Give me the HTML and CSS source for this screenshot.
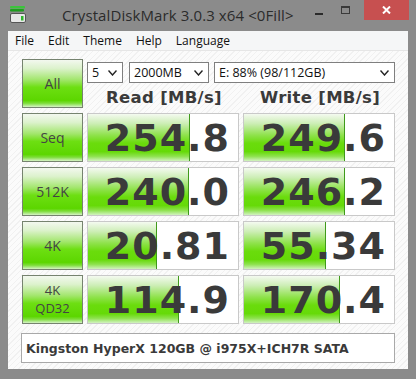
FILE: index.html
```html
<!DOCTYPE html>
<html lang="en">
<head>
  <meta charset="UTF-8" />
  <title>CrystalDiskMark 3.0.3 x64 &lt;0Fill&gt;</title>
  <link rel="stylesheet" href="styles.css">
</head>
<body>
  <div class="window">
    <div class="titlebar">
      <svg class="app-icon" width="16" height="18" viewBox="0 0 16 18">
        <rect x="0" y="0" width="15" height="2.5" rx="1" fill="#3cc43c"/>
        <rect x="0" y="3" width="14" height="2.5" rx="1" fill="#1e9e1e"/>
        <rect x="0.5" y="7.5" width="15" height="9" rx="1.5" fill="#e8e8e8" stroke="#555" stroke-width="1"/>
        <rect x="11" y="10" width="2.5" height="4.5" fill="#2cb82c"/>
      </svg>
      <div class="title">CrystalDiskMark 3.0.3 x64 &lt;0Fill&gt;</div>
      <div class="win-btns">
        <div class="wbtn min"><span></span></div>
        <div class="wbtn max"><span></span></div>
        <div class="wbtn close">
          <svg width="9" height="8" viewBox="0 0 9 8"><path d="M1 0.5 L8 7.5 M8 0.5 L1 7.5" stroke="#fff" stroke-width="2"/></svg>
        </div>
      </div>
    </div>

    <div class="client">
      <div class="menubar">
        <span>File</span><span>Edit</span><span>Theme</span><span>Help</span><span>Language</span>
      </div>

      <div class="content">
        <div class="grid">
          <div class="btn">All</div>
          <div class="top">
            <div class="selects">
              <div class="sel sel-count"><span>5</span><svg width="9" height="6" viewBox="0 0 9 6"><path d="M0.5 0.5 L4.5 5 L8.5 0.5" fill="none" stroke="#222" stroke-width="1.4"/></svg></div>
              <div class="sel sel-size"><span>2000MB</span><svg width="9" height="6" viewBox="0 0 9 6"><path d="M0.5 0.5 L4.5 5 L8.5 0.5" fill="none" stroke="#222" stroke-width="1.4"/></svg></div>
              <div class="sel sel-drive"><span>E: 88% (98/112GB)</span><svg width="9" height="6" viewBox="0 0 9 6"><path d="M0.5 0.5 L4.5 5 L8.5 0.5" fill="none" stroke="#222" stroke-width="1.4"/></svg></div>
            </div>
            <div class="heads">
              <div class="head">Read [MB/s]</div>
              <div class="head">Write [MB/s]</div>
            </div>
          </div>

          <div class="btn">Seq</div>
          <div class="result"><div class="bar" style="width:101px"></div><span>254.8</span></div>
          <div class="result"><div class="bar" style="width:100px"></div><span>249.6</span></div>

          <div class="btn">512K</div>
          <div class="result"><div class="bar" style="width:100px"></div><span>240.0</span></div>
          <div class="result"><div class="bar" style="width:100px"></div><span>246.2</span></div>

          <div class="btn">4K</div>
          <div class="result"><div class="bar" style="width:68px"></div><span>20.81</span></div>
          <div class="result"><div class="bar" style="width:81px"></div><span>55.34</span></div>

          <div class="btn two-line"><span>4K</span><span>QD32</span></div>
          <div class="result"><div class="bar" style="width:90px"></div><span>114.9</span></div>
          <div class="result"><div class="bar" style="width:95px"></div><span>170.4</span></div>
        </div>

        <div class="comment">Kingston HyperX 120GB @ i975X+ICH7R SATA</div>
      </div>
    </div>
  </div>
</body>
</html>
```

FILE: styles.css
```css
html, body {
  margin: 0;
  padding: 0;
}
body {
  width: 416px;
  height: 379px;
  overflow: hidden;
  background: #8b8b8b;
  font-family: "Open Sans", "Noto Sans", sans-serif;
}
.window {
  width: 416px;
  height: 379px;
  display: flex;
  flex-direction: column;
}
.titlebar {
  height: 31px;
  display: flex;
  align-items: flex-start;
}
.app-icon {
  margin: 6px 0 0 10px;
}
.title {
  margin: 5px 0 0 36px;
  font-size: 15px;
  color: #2b2b2b;
  letter-spacing: 0.1px;
}
.win-btns {
  margin-left: auto;
  margin-right: 7px;
  display: flex;
}
.wbtn {
  height: 20px;
  display: flex;
  align-items: center;
  justify-content: center;
}
.wbtn.min {
  width: 26px;
}
.wbtn.min span {
  width: 8px;
  height: 2px;
  background: #2a2a2a;
  margin-top: 7px;
}
.wbtn.max {
  width: 27px;
  margin-right: 5px;
}
.wbtn.max span {
  width: 7px;
  height: 5px;
  border: 1px solid #3a3a3a;
  border-top-width: 2px;
  margin-top: -1px;
}
.wbtn.close {
  width: 45px;
  background: #c75050;
}
.client {
  margin: 0 8px;
  height: 338px;
  display: flex;
  flex-direction: column;
  background: repeating-linear-gradient(-45deg, #fbfbfb 0 3px, #f1f1f1 3px 4px);
}
.menubar {
  height: 19px;
  background: #f5f6f7;
  border-bottom: 1px solid #e6e6e6;
  display: flex;
  gap: 14px;
  padding-left: 7px;
  font-size: 12px;
  line-height: 19px;
  color: #111;
}
.content {
  padding: 8px 0 0 14px;
}
.grid {
  display: grid;
  grid-template-columns: 61px 152px 152px;
  grid-template-rows: repeat(5, 49px);
  column-gap: 4px;
  row-gap: 5px;
}
.btn {
  box-sizing: border-box;
  border: 1px solid #76836f;
  background: linear-gradient(to bottom, #f3f8ef 0%, #dcf2cc 18%, #a2e66c 42%, #6ddf12 58%, #5cd600 86%, #7ddd3a 92%, #d6f3c6 100%);
  color: #444;
  font-size: 14px;
  display: flex;
  align-items: center;
  justify-content: center;
  text-align: center;
}
.btn.two-line {
  flex-direction: column;
  gap: 1px;
  font-size: 13px;
  line-height: 17px;
}
.top {
  grid-column: 2 / 4;
  display: flex;
  flex-direction: column;
}
.selects {
  display: flex;
  margin-top: 3px;
  height: 21px;
}
.sel {
  box-sizing: border-box;
  height: 21px;
  border: 1px solid #7f7f7f;
  background: #fff;
  display: flex;
  align-items: center;
  justify-content: space-between;
  padding: 0 5px 0 4px;
  font-size: 12.5px;
  color: #111;
}
.sel-count {
  width: 36px;
}
.sel-size {
  width: 80px;
  margin-left: 6px;
}
.sel-drive {
  width: 181px;
  margin-left: 5px;
}
.heads {
  display: grid;
  grid-template-columns: 152px 152px;
  column-gap: 4px;
  margin-top: 5px;
}
.head {
  text-align: center;
  font-family: "DejaVu Sans", sans-serif;
  font-weight: bold;
  font-size: 16.5px;
  color: #3a3a3a;
  letter-spacing: 0.3px;
  padding-left: 2px;
}
.result {
  position: relative;
  box-sizing: border-box;
  border: 1px solid #c9c9c9;
  background: #fff;
  display: flex;
  align-items: center;
  justify-content: flex-end;
  padding-right: 8px;
}
.bar {
  position: absolute;
  left: 0;
  top: 0;
  bottom: 0;
  border-right: 1px solid #3f9a1a;
  background: linear-gradient(to bottom, #f4faf0 0%, #cdeeb6 20%, #8fe24c 45%, #6adc0c 62%, #66da08 80%, #8ee24e 90%, #d2f2c0 100%);
}
.result span {
  position: relative;
  font-family: "DejaVu Sans", sans-serif;
  font-weight: bold;
  font-size: 38px;
  letter-spacing: 1px;
  color: #3a3a3a;
  line-height: 1;
}
.comment {
  box-sizing: border-box;
  width: 374px;
  height: 30px;
  margin: 9px 0 0 -1px;
  border: 1px solid #a9a9a9;
  background: #fff;
  font-family: "DejaVu Sans", sans-serif;
  font-weight: bold;
  font-size: 12.5px;
  color: #3a3a3a;
  display: flex;
  align-items: center;
  padding-left: 4px;
}
```
